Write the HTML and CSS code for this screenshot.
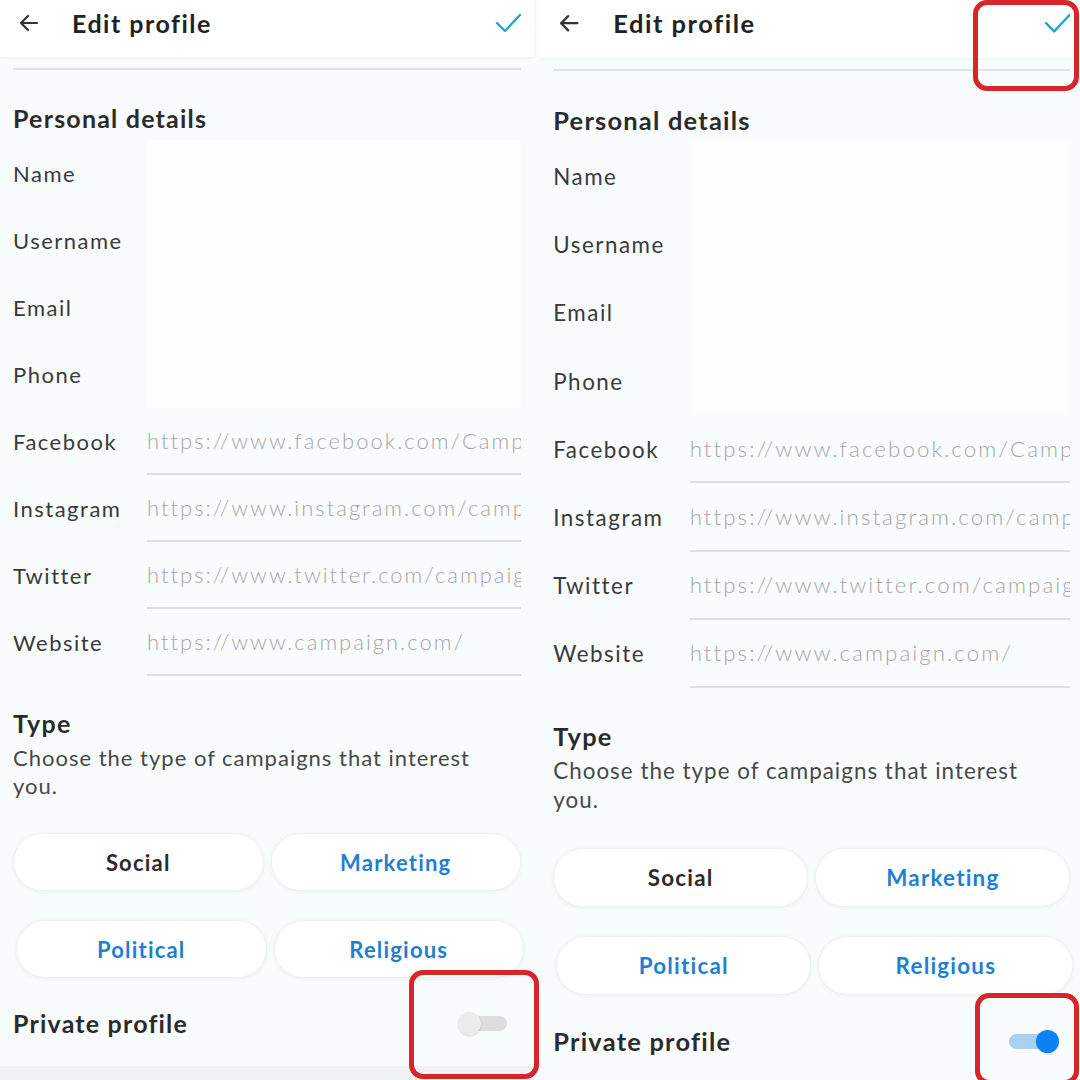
FILE: index.html
```html
<!DOCTYPE html>
<html lang="en">
<head>
    <meta charset="UTF-8">
    <meta name="viewport" content="width=device-width, initial-scale=1.0">
    <title>Edit profile - before and after</title>
    <link rel="stylesheet" href="styles.css">
</head>
<body>

    <div class="screens">

        <!-- Before: private profile switched off -->
        <div class="shot">
            <section class="phone">
                <header class="topbar">
                    <svg class="back" width="24" height="24" viewBox="0 0 24 24"><path d="M20 12H5M11 5l-7 7 7 7" fill="none" stroke="#333" stroke-width="2.2" stroke-linecap="round" stroke-linejoin="round"/></svg>
                    <h1>Edit profile</h1>
                    <svg class="check" width="26" height="22" viewBox="0 0 26 22"><path d="M2 11l8 8L25 3" fill="none" stroke="#2aa2d3" stroke-width="2.4" stroke-linecap="round" stroke-linejoin="round"/></svg>
                </header>
                <div class="content">
                    <hr class="rule">
                    <h2>Personal details</h2>
                    <div class="fields">
                        <div class="field"><span class="label">Name</span><span class="input blank"></span></div>
                        <div class="field"><span class="label">Username</span><span class="input blank"></span></div>
                        <div class="field"><span class="label">Email</span><span class="input blank"></span></div>
                        <div class="field"><span class="label">Phone</span><span class="input blank"></span></div>
                        <div class="field"><span class="label">Facebook</span><span class="input">https://www.facebook.com/Campaign</span></div>
                        <div class="field"><span class="label">Instagram</span><span class="input">https://www.instagram.com/campaign</span></div>
                        <div class="field"><span class="label">Twitter</span><span class="input">https://www.twitter.com/campaign</span></div>
                        <div class="field"><span class="label">Website</span><span class="input">https://www.campaign.com/</span></div>
                    </div>
                    <h2 class="type-title">Type</h2>
                    <p class="hint">Choose the type of campaigns that interest you.</p>
                    <div class="chips">
                        <button class="chip">Social</button>
                        <button class="chip active">Marketing</button>
                        <button class="chip active shifted">Political</button>
                        <button class="chip active shifted">Religious</button>
                    </div>
                    <div class="private">
                        <h2>Private profile</h2>
                        <span class="toggle"></span>
                    </div>
                </div>
                <div class="navbar"></div>
            </section>
            <div class="mark mark-toggle-off"></div>
        </div>

        <!-- After: private profile switched on -->
        <div class="shot">
            <section class="phone phone-after">
                <header class="topbar">
                    <svg class="back" width="24" height="24" viewBox="0 0 24 24"><path d="M20 12H5M11 5l-7 7 7 7" fill="none" stroke="#333" stroke-width="2.2" stroke-linecap="round" stroke-linejoin="round"/></svg>
                    <h1>Edit profile</h1>
                    <svg class="check" width="26" height="22" viewBox="0 0 26 22"><path d="M2 11l8 8L25 3" fill="none" stroke="#2aa2d3" stroke-width="2.4" stroke-linecap="round" stroke-linejoin="round"/></svg>
                </header>
                <div class="content">
                    <hr class="rule">
                    <h2>Personal details</h2>
                    <div class="fields">
                        <div class="field"><span class="label">Name</span><span class="input blank"></span></div>
                        <div class="field"><span class="label">Username</span><span class="input blank"></span></div>
                        <div class="field"><span class="label">Email</span><span class="input blank"></span></div>
                        <div class="field"><span class="label">Phone</span><span class="input blank"></span></div>
                        <div class="field"><span class="label">Facebook</span><span class="input">https://www.facebook.com/Campaign</span></div>
                        <div class="field"><span class="label">Instagram</span><span class="input">https://www.instagram.com/campaign</span></div>
                        <div class="field"><span class="label">Twitter</span><span class="input">https://www.twitter.com/campaign</span></div>
                        <div class="field"><span class="label">Website</span><span class="input">https://www.campaign.com/</span></div>
                    </div>
                    <h2 class="type-title">Type</h2>
                    <p class="hint">Choose the type of campaigns that interest you.</p>
                    <div class="chips">
                        <button class="chip">Social</button>
                        <button class="chip active">Marketing</button>
                        <button class="chip active shifted">Political</button>
                        <button class="chip active shifted">Religious</button>
                    </div>
                    <div class="private">
                        <h2>Private profile</h2>
                        <span class="toggle on"></span>
                    </div>
                </div>
            </section>
            <div class="mark mark-check"></div>
            <div class="mark mark-toggle-on"></div>
        </div>

    </div>

</body>
</html>
```

FILE: styles.css
```css
* {
    box-sizing: border-box;
}
body {
    margin: 0;
    background: #f9fcfd;
    font-family: Lato, "Open Sans", sans-serif;
    color: #333;
}
.screens {
    display: flex;
    width: 1080px;
    height: 1080px;
    overflow: hidden;
}
.shot {
    position: relative;
    width: 540px;
    height: 1080px;
    overflow: hidden;
    flex: none;
}
.phone {
    width: 534px;
    height: 1080px;
    display: flex;
    flex-direction: column;
    background: #f9fcfd;
}
.phone-after {
    zoom: 1.018;
}

/* top bar */
.topbar {
    height: 57px;
    flex: none;
    display: flex;
    align-items: flex-start;
    padding: 7px 13px 0 17px;
    background: #fff;
    box-shadow: 0 1px 3px rgba(0, 0, 0, 0.05);
}
.topbar .back {
    margin-top: 4px;
}
.topbar h1 {
    margin: 0 0 0 31px;
    font-size: 25px;
    line-height: 32px;
    font-weight: 700;
    letter-spacing: 1.5px;
    color: #222;
    flex: 1;
}
.topbar .check {
    margin-top: 5px;
}

.content {
    padding: 11px 13px 0 13px;
}
.rule {
    margin: 0;
    border: none;
    border-top: 2px solid #dfe4e7;
}
h2 {
    margin: 0;
    font-size: 25px;
    line-height: 30px;
    font-weight: 700;
    letter-spacing: 1.2px;
    color: #2b2b2b;
}
.content > h2:first-of-type {
    margin-top: 33px;
}

/* fields */
.fields {
    margin-top: 7px;
}
.field {
    display: flex;
    align-items: center;
    height: 67px;
}
.label {
    width: 134px;
    flex: none;
    font-size: 22px;
    letter-spacing: 1.5px;
    color: #3a3a3a;
}
.input {
    flex: 1;
    height: 100%;
    display: flex;
    align-items: center;
    white-space: nowrap;
    overflow: hidden;
    font-size: 22px;
    font-weight: 300;
    letter-spacing: 2px;
    color: #a6a6a6;
    border-bottom: 2px solid #dcdfe1;
}
.input.blank {
    background: rgba(255, 255, 255, 0.55);
    border-bottom: none;
}

/* type */
.type-title {
    margin-top: 32px;
}
.hint {
    margin: 6px 0 0;
    width: 480px;
    font-size: 22px;
    line-height: 28px;
    letter-spacing: 1px;
    color: #484848;
}
.chips {
    display: grid;
    grid-template-columns: 1fr 1fr;
    column-gap: 7px;
    row-gap: 29px;
    margin-top: 33px;
}
.chip {
    height: 58px;
    border: 1px solid #eef0f1;
    border-radius: 29px;
    background: #fff;
    box-shadow: 0 1px 4px rgba(0, 0, 0, 0.06);
    font-family: inherit;
    font-size: 22px;
    font-weight: 700;
    letter-spacing: 1.2px;
    color: #2b2b2b;
}
.chip.active {
    color: #1f7fd1;
}
.chip.shifted {
    transform: translateX(3px);
}

/* private profile switch */
.private {
    display: flex;
    align-items: center;
    justify-content: space-between;
    margin-top: 30px;
    padding-right: 14px;
}
.toggle {
    position: relative;
    width: 46px;
    height: 15px;
    border-radius: 8px;
    background: #dddddd;
}
.toggle::after {
    content: "";
    position: absolute;
    left: -3px;
    top: -4px;
    width: 23px;
    height: 23px;
    border-radius: 50%;
    background: #ececec;
    box-shadow: 0 1px 2px rgba(0, 0, 0, 0.15);
}
.toggle.on {
    background: #a9d0f5;
}
.toggle.on::after {
    left: auto;
    right: -3px;
    background: #0b83f2;
}
.navbar {
    margin-top: auto;
    height: 14px;
    background: #f0f2f3;
}

/* red highlight frames */
.mark {
    position: absolute;
    border: 5px solid #d7262b;
    border-radius: 14px;
}
.mark-toggle-off {
    left: 409px;
    top: 970px;
    width: 130px;
    height: 109px;
}
.mark-check {
    left: 433px;
    top: 0;
    width: 106px;
    height: 91px;
}
.mark-toggle-on {
    left: 435px;
    top: 993px;
    width: 104px;
    height: 92px;
}
```
